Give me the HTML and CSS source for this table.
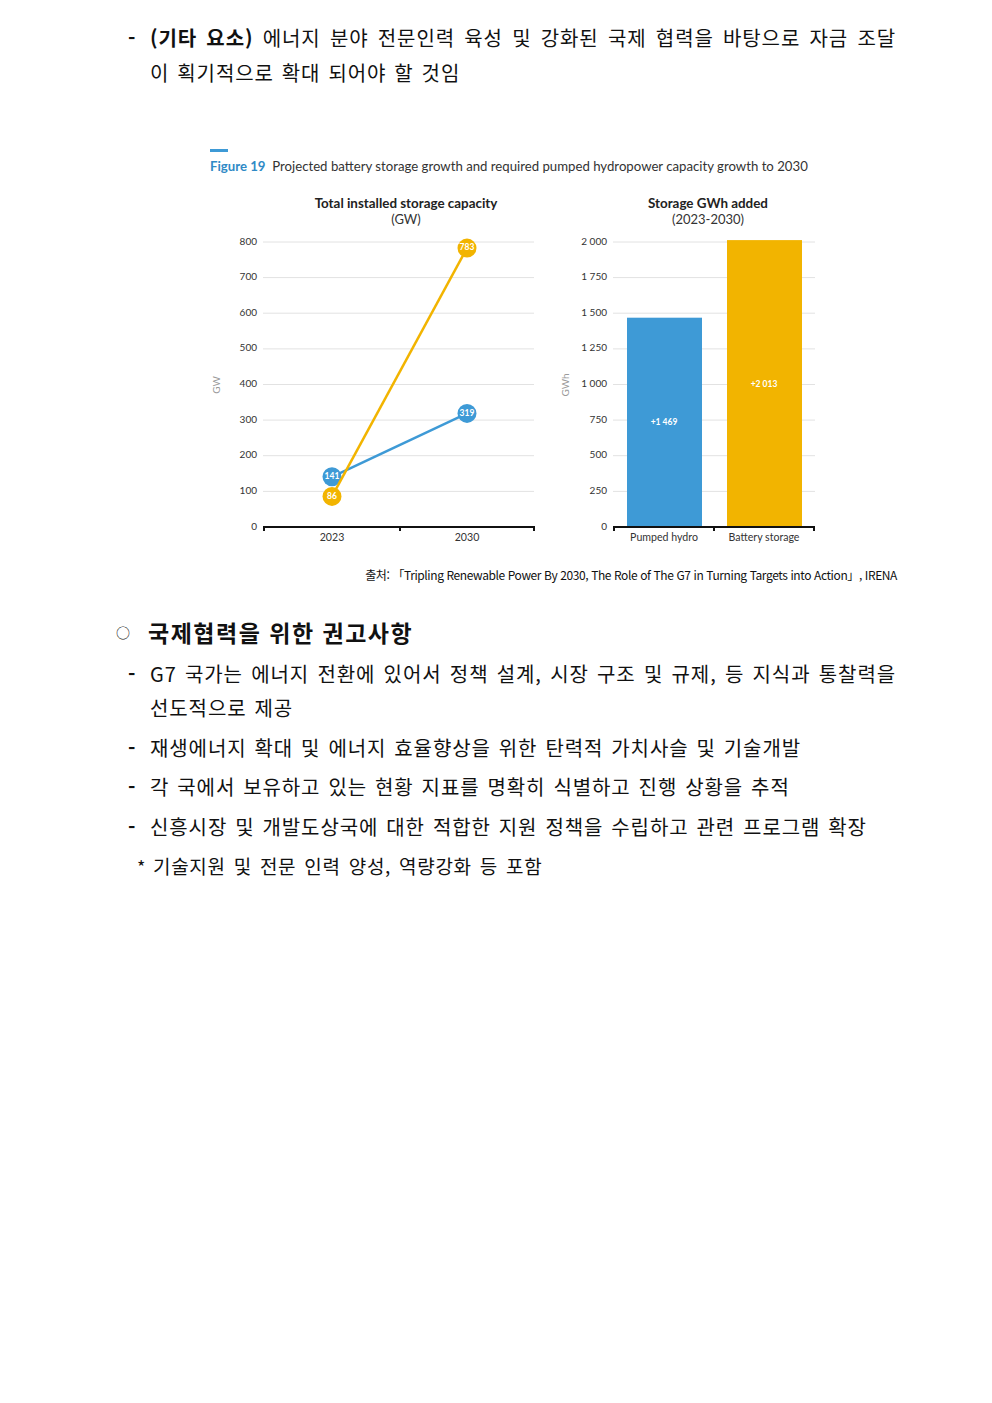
FILE: index.html
```html
<!DOCTYPE html>
<html lang="ko">
<head>
<meta charset="utf-8">
<link rel="stylesheet" href="styles.css">
</head>
<body>
<div class="page">
  <div class="item top-item">
    <span class="dash">-</span>
    <div class="txt">
      <p class="line-just"><b class="strong">(기타 요소)</b> 에너지 분야 전문인력 육성 및 강화된 국제 협력을 바탕으로 자금 조달</p>
      <p>이 획기적으로 확대 되어야 할 것임</p>
    </div>
  </div>

  <div class="figure">
    <div class="fig-rule"></div>
    <div class="fig-title"><b>Figure 19</b>&nbsp; Projected battery storage growth and required pumped hydropower capacity growth to 2030</div>
    <svg class="charts" width="620" height="360" viewBox="200 190 620 360" xmlns="http://www.w3.org/2000/svg">
      <!-- chart titles -->
      <text class="ct-bold" x="406" y="208" text-anchor="middle">Total installed storage capacity</text>
      <text class="ct" x="406" y="224" text-anchor="middle">(GW)</text>
      <text class="ct-bold" x="708" y="208" text-anchor="middle">Storage GWh added</text>
      <text class="ct" x="708" y="224" text-anchor="middle">(2023-2030)</text>

      <!-- left grid -->
      <g class="grid">
        <line x1="263" x2="534" y1="242" y2="242"/>
        <line x1="263" x2="534" y1="277.6" y2="277.6"/>
        <line x1="263" x2="534" y1="313.2" y2="313.2"/>
        <line x1="263" x2="534" y1="348.9" y2="348.9"/>
        <line x1="263" x2="534" y1="384.5" y2="384.5"/>
        <line x1="263" x2="534" y1="420.1" y2="420.1"/>
        <line x1="263" x2="534" y1="455.7" y2="455.7"/>
        <line x1="263" x2="534" y1="491.4" y2="491.4"/>
      </g>
      <g class="ylab" text-anchor="end">
        <text x="257" y="242">800</text>
        <text x="257" y="277.6">700</text>
        <text x="257" y="313.2">600</text>
        <text x="257" y="348.9">500</text>
        <text x="257" y="384.5">400</text>
        <text x="257" y="420.1">300</text>
        <text x="257" y="455.7">200</text>
        <text x="257" y="491.4">100</text>
        <text x="257" y="527">0</text>
      </g>
      <text class="unit" transform="translate(217 385) rotate(-90)" text-anchor="middle">GW</text>
      <g class="axis">
        <line x1="263" x2="535" y1="527" y2="527"/>
        <line x1="264" x2="264" y1="527" y2="531"/>
        <line x1="400" x2="400" y1="527" y2="531"/>
        <line x1="534" x2="534" y1="527" y2="531"/>
      </g>
      <g class="xlab" text-anchor="middle">
        <text x="332" y="538">2023</text>
        <text x="467" y="538">2030</text>
      </g>
      <!-- blue series -->
      <line class="s-blue" x1="332" y1="476.8" x2="467" y2="413.4"/>
      <circle class="c-blue" cx="332" cy="476.8" r="9.5"/>
      <circle class="c-blue" cx="467" cy="413.4" r="9.5"/>
      <text class="pt" x="332" y="477" text-anchor="middle">141</text>
      <text class="pt" x="467" y="413.6" text-anchor="middle">319</text>
      <!-- yellow series -->
      <line class="s-yellow" x1="332" y1="496.4" x2="467" y2="248.1"/>
      <circle class="c-yellow" cx="332" cy="496.4" r="9.5"/>
      <circle class="c-yellow" cx="467" cy="248.1" r="9.5"/>
      <text class="pt" x="332" y="496.6" text-anchor="middle">86</text>
      <text class="pt" x="467" y="248.3" text-anchor="middle">783</text>

      <!-- right grid -->
      <g class="grid">
        <line x1="613" x2="815" y1="242" y2="242"/>
        <line x1="613" x2="815" y1="277.6" y2="277.6"/>
        <line x1="613" x2="815" y1="313.2" y2="313.2"/>
        <line x1="613" x2="815" y1="348.9" y2="348.9"/>
        <line x1="613" x2="815" y1="384.5" y2="384.5"/>
        <line x1="613" x2="815" y1="420.1" y2="420.1"/>
        <line x1="613" x2="815" y1="455.7" y2="455.7"/>
        <line x1="613" x2="815" y1="491.4" y2="491.4"/>
      </g>
      <g class="ylab" text-anchor="end">
        <text x="607" y="242">2 000</text>
        <text x="607" y="277.6">1 750</text>
        <text x="607" y="313.2">1 500</text>
        <text x="607" y="348.9">1 250</text>
        <text x="607" y="384.5">1 000</text>
        <text x="607" y="420.1">750</text>
        <text x="607" y="455.7">500</text>
        <text x="607" y="491.4">250</text>
        <text x="607" y="527">0</text>
      </g>
      <text class="unit" transform="translate(566 385) rotate(-90)" text-anchor="middle">GWh</text>
      <rect class="b-blue" x="627" y="317.7" width="75" height="209.3"/>
      <rect class="b-yellow" x="727" y="240.1" width="75" height="286.9"/>
      <text class="pt" x="664" y="422.5" text-anchor="middle">+1 469</text>
      <text class="pt" x="764" y="384.5" text-anchor="middle">+2 013</text>
      <g class="axis">
        <line x1="613" x2="815" y1="527" y2="527"/>
        <line x1="614" x2="614" y1="527" y2="531"/>
        <line x1="714" x2="714" y1="527" y2="531"/>
        <line x1="814" x2="814" y1="527" y2="531"/>
      </g>
      <g class="xlab" text-anchor="middle">
        <text x="664" y="538">Pumped hydro</text>
        <text x="764" y="538">Battery storage</text>
      </g>
    </svg>
  </div>

  <p class="source">출처: 「Tripling Renewable Power By 2030, The Role of The G7 in Turning Targets into Action」, IRENA</p>

  <h2 class="heading"><span class="circle">○</span>국제협력을 위한 권고사항</h2>

  <div class="list">
    <div class="item">
      <span class="dash">-</span>
      <p class="txt">G7 국가는 에너지 전환에 있어서 정책 설계, 시장 구조 및 규제, 등 지식과 통찰력을 선도적으로 제공</p>
    </div>
    <div class="item">
      <span class="dash">-</span>
      <p class="txt">재생에너지 확대 및 에너지 효율향상을 위한 탄력적 가치사슬 및 기술개발</p>
    </div>
    <div class="item">
      <span class="dash">-</span>
      <p class="txt">각 국에서 보유하고 있는 현황 지표를 명확히 식별하고 진행 상황을 추적</p>
    </div>
    <div class="item">
      <span class="dash">-</span>
      <p class="txt">신흥시장 및 개발도상국에 대한 적합한 지원 정책을 수립하고 관련 프로그램 확장</p>
    </div>
    <div class="note">
      <span class="star">*</span>
      <p class="note-txt">기술지원 및 전문 인력 양성, 역량강화 등 포함</p>
    </div>
  </div>
</div>
</body>
</html>
```

FILE: styles.css
```css
html, body {
  margin: 0;
  padding: 0;
  background: #ffffff;
}

body {
  font-family: "Noto Sans CJK KR", "Noto Sans", sans-serif;
  color: #111111;
}

.page {
  width: 992px;
  box-sizing: border-box;
  padding: 20px 96px 0 128px;
}

p { margin: 0; }

.item {
  display: flex;
  align-items: flex-start;
}

.dash {
  width: 22px;
  flex: 0 0 22px;
  font-size: 20px;
  line-height: 34px;
  font-weight: 700;
}

.txt {
  flex: 1;
  font-size: 20px;
  line-height: 34px;
  text-align: justify;
  word-break: keep-all;
  word-spacing: 1.5px;
  letter-spacing: 0.9px;
}

.line-just {
  text-align: justify;
  text-align-last: justify;
  white-space: nowrap;
}

.top-item .txt,
.top-item .dash {
  line-height: 35px;
}

.strong {
  font-weight: 700;
}

/* Figure */
.figure {
  margin: 59px 0 0 82px;
  width: 620px;
  font-family: "Lato", "Open Sans", sans-serif;
}

.fig-rule {
  width: 18px;
  height: 3px;
  background: #3e9ad6;
}

.fig-title {
  margin-top: 6px;
  font-size: 13.2px;
  line-height: 16px;
  color: #333333;
  white-space: nowrap;
}

.fig-title b {
  color: #2f8ac6;
  font-weight: 700;
}

.charts {
  display: block;
  margin: 16px 0 0 -10px;
  font-family: "Lato", "Open Sans", sans-serif;
}

.ct-bold {
  font-size: 13.4px;
  font-weight: 700;
  fill: #222222;
}

.ct {
  font-size: 13px;
  fill: #333333;
}

.grid line {
  stroke: #e2e2e2;
  stroke-width: 1;
}

.ylab text {
  font-size: 10px;
  fill: #333333;
  dominant-baseline: middle;
}

.xlab text {
  font-size: 10.6px;
  fill: #333333;
  dominant-baseline: middle;
}

.unit {
  font-size: 10px;
  fill: #9a9a9a;
  dominant-baseline: middle;
}

.axis line {
  stroke: #111111;
  stroke-width: 2;
}

.s-blue {
  stroke: #3e9ad6;
  stroke-width: 2.5;
}

.s-yellow {
  stroke: #f2b400;
  stroke-width: 2.5;
}

.c-blue, .b-blue { fill: #3e9ad6; }
.c-yellow, .b-yellow { fill: #f2b400; }

.pt {
  font-size: 8.5px;
  font-weight: 700;
  fill: #ffffff;
  dominant-baseline: middle;
}

/* Source */
.source {
  margin-top: 16px;
  width: 769px;
  text-align: right;
  font-size: 12px;
  line-height: 18px;
  letter-spacing: -0.4px;
  color: #111111;
}

/* Heading */
.heading {
  margin: 31px 0 0 -12px;
  display: flex;
  align-items: center;
  font-size: 23px;
  line-height: 35px;
  font-weight: 700;
  letter-spacing: 1.5px;
}

.circle {
  width: 32px;
  flex: 0 0 32px;
  font-size: 14px;
  font-weight: 400;
  letter-spacing: 0;
}

.list {
  margin-top: 7px;
  display: flex;
  flex-direction: column;
  gap: 5.5px;
}

.note {
  display: flex;
  align-items: flex-start;
  padding-left: 9px;
}

.star {
  width: 16px;
  flex: 0 0 16px;
  font-size: 18px;
  line-height: 34px;
}

.note-txt {
  font-size: 19px;
  line-height: 34px;
  word-spacing: 2px;
  letter-spacing: 0.7px;
}
```
